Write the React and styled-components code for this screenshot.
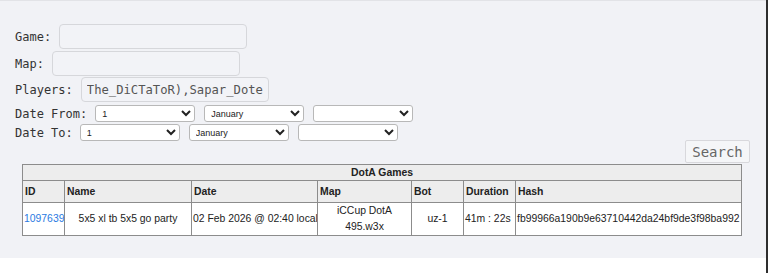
import React from "react"
import styled, { createGlobalStyle } from "styled-components"

const Global = createGlobalStyle`
    html, body {
        margin: 0;
        padding: 0;
        background: #ffffff;
    }
`

const Page = styled.div`
    min-height: 273px;
    box-sizing: border-box;
    border-right: 2px solid #2e2e2e;
`

const Panel = styled.div`
    background: #f1f2f6;
    border-top: 1px solid #e2e3e7;
    height: 258px;
    box-sizing: border-box;
    padding-top: 23px;
`

const Form = styled.form`
    display: flex;
    flex-direction: column;
    padding-left: 15px;
    font-family: "DejaVu Sans Mono", monospace;
    font-size: 12px;
    color: #333;
`

const Row = styled.div`
    display: flex;
    align-items: center;
    gap: ${p => p.$gap || 8}px;
    margin-bottom: ${p => p.$mb || 0}px;
`

const Label = styled.label`
    white-space: nowrap;
    margin-right: ${p => p.$mr || 0}px;
`

const TextInput = styled.input`
    width: 188px;
    height: 25px;
    margin: 0;
    box-sizing: border-box;
    border: 1px solid #d6d7db;
    border-radius: 4px;
    background: #f2f3f7;
    padding: 0 5px;
    font-family: "DejaVu Sans Mono", monospace;
    font-size: 12.2px;
    color: #555;
    outline: none;
`

const Select = styled.select`
    width: 100px;
    height: 17px;
    margin: 0;
    box-sizing: border-box;
    border: 1px solid #b8b8b8;
    border-radius: 3px;
    background: #ffffff;
    font-family: "Liberation Sans", Arial, sans-serif;
    font-size: 9px;
    color: #222;
    padding: 0 2px;
`

const ButtonBar = styled.div`
    display: flex;
    justify-content: flex-end;
    padding-right: 16px;
    margin-top: -3px;
    margin-bottom: 1px;
`

const SearchButton = styled.button`
    width: 65px;
    height: 23px;
    box-sizing: border-box;
    border: 1px solid #d8d8dc;
    border-radius: 2px;
    background: #f5f6f8;
    font-family: "DejaVu Sans Mono", monospace;
    font-size: 14px;
    color: #666;
    padding: 0;
`

const Table = styled.table`
    margin: 0 0 0 22px;
    width: 719px;
    table-layout: fixed;
    border-collapse: collapse;
    font-family: "Liberation Sans", Arial, sans-serif;
    font-size: 10.4px;
    color: #222;
    border: 1px solid #8c8c8c;
`

const Caption = styled.th`
    background: #ededed;
    height: 15px;
    padding: 0;
    font-weight: bold;
    text-align: center;
    border: 1px solid #8c8c8c;
`

const Head = styled.th`
    background: #ededed;
    height: 21px;
    padding: 0 0 0 2px;
    font-weight: bold;
    text-align: left;
    border: 1px solid #8c8c8c;
`

const Cell = styled.td`
    background: #ffffff;
    height: 32px;
    padding: 0 1px;
    line-height: 16px;
    text-align: ${p => p.$align || "left"};
    border: 1px solid #8c8c8c;
    white-space: ${p => (p.$wrap ? "normal" : "nowrap")};
    overflow: hidden;
`

const IdLink = styled.a`
    color: #2a7ae2;
    text-decoration: none;
`

const days = Array.from({ length: 31 }, (_, i) => i + 1)
const months = ["January", "February", "March", "April", "May", "June", "July", "August", "September", "October", "November", "December"]

function DateRow({ label, mr }) {
    return (
        <Row $gap={9} $mb={2}>
            <Label $mr={mr}>{label}</Label>
            <Select defaultValue="1">
                {days.map(d => <option key={d}>{d}</option>)}
            </Select>
            <Select defaultValue="January">
                {months.map(m => <option key={m}>{m}</option>)}
            </Select>
            <Select defaultValue="">
                <option value=""></option>
            </Select>
        </Row>
    )
}

export default function App() {
    return (
        <Page>
            <Global />
            <Panel>
                <Form onSubmit={e => e.preventDefault()}>
                    <Row $mb={2}>
                        <Label>Game:</Label>
                        <TextInput />
                    </Row>
                    <Row $mb={1}>
                        <Label>Map:</Label>
                        <TextInput />
                    </Row>
                    <Row $mb={3}>
                        <Label>Players:</Label>
                        <TextInput defaultValue="The_DiCTaToR),Sapar_Dote" />
                    </Row>
                    <DateRow label="Date From:" mr={-1} />
                    <DateRow label="Date To:" mr={-2} />
                </Form>
                <ButtonBar>
                    <SearchButton>Search</SearchButton>
                </ButtonBar>
                <Table>
                    <colgroup>
                        <col style={{ width: 42 }} />
                        <col style={{ width: 127 }} />
                        <col style={{ width: 126 }} />
                        <col style={{ width: 94 }} />
                        <col style={{ width: 52 }} />
                        <col style={{ width: 52 }} />
                        <col style={{ width: 226 }} />
                    </colgroup>
                    <thead>
                        <tr><Caption colSpan={7}>DotA Games</Caption></tr>
                        <tr>
                            <Head>ID</Head>
                            <Head>Name</Head>
                            <Head>Date</Head>
                            <Head>Map</Head>
                            <Head>Bot</Head>
                            <Head>Duration</Head>
                            <Head>Hash</Head>
                        </tr>
                    </thead>
                    <tbody>
                        <tr>
                            <Cell><IdLink href="#">1097639</IdLink></Cell>
                            <Cell $align="center">5x5 xl tb 5x5 go party</Cell>
                            <Cell>02 Feb 2026 @ 02:40 local</Cell>
                            <Cell $align="center" $wrap>iCCup DotA 495.w3x</Cell>
                            <Cell $align="center">uz-1</Cell>
                            <Cell>41m : 22s</Cell>
                            <Cell>fb99966a190b9e63710442da24bf9de3f98ba992</Cell>
                        </tr>
                    </tbody>
                </Table>
            </Panel>
        </Page>
    )
}
